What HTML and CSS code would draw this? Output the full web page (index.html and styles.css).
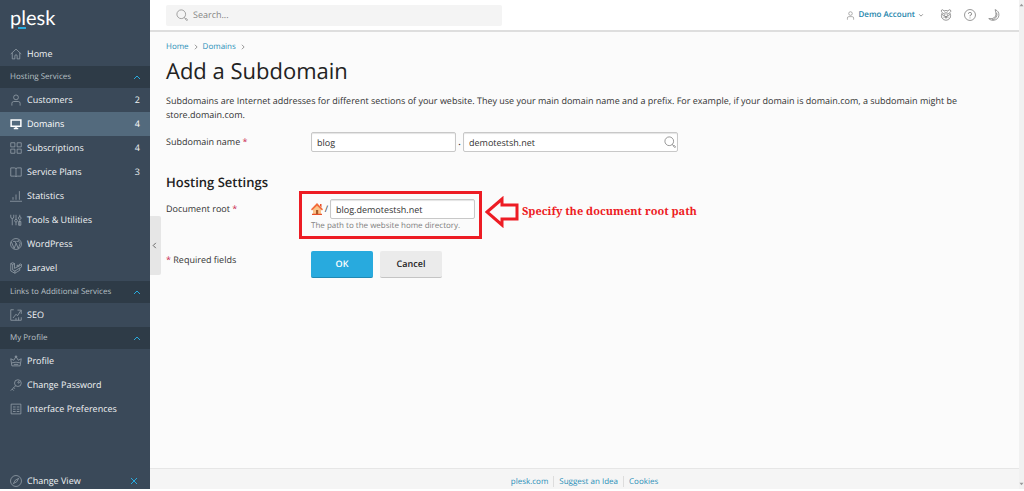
FILE: index.html
```html
<!DOCTYPE html>
<html lang="en">
<head>
    <meta charset="UTF-8">
    <meta name="viewport" content="width=device-width, initial-scale=1.0">
    <title>Add a Subdomain - Plesk</title>
    <link rel="stylesheet" href="styles.css">
</head>
<body>
    <div class="page">
        <!-- Sidebar -->
        <aside class="sidebar">
            <a class="logo" href="#">plesk</a>
            <nav class="nav">
                <ul class="menu">
                    <li><a class="menu-item" href="#">
                        <svg class="icon" viewBox="0 0 16 16"><path d="M1 8 8 1.500 15 8M3 6.500V14.500H6.500V10.500Q6.500 9 8 9T9.500 10.500V14.500H13V6.500"/></svg>
                        <span>Home</span></a></li>
                </ul>

                <button class="section" type="button">Hosting Services
                    <svg class="chevron" viewBox="0 0 8 8"><path d="M1 6 4 3 7 6"/></svg></button>
                <ul class="menu menu-main">
                    <li><a class="menu-item" href="#">
                        <svg class="icon" viewBox="0 0 16 16"><circle cx="8" cy="4.500" r="3.200"/><path d="M2.500 15.500V12.500Q2.500 10 5 10H11Q13.500 10 13.500 12.500V15.500"/></svg>
                        <span>Customers</span><span class="count">2</span></a></li>
                    <li><a class="menu-item active" href="#">
                        <svg class="icon" viewBox="0 0 16 16"><path stroke-width="2" d="M1.500 2.500H14.500V11H1.500Z"/><path stroke-width="2" d="M5 14H11M8 11V14"/></svg>
                        <span>Domains</span><span class="count">4</span></a></li>
                    <li><a class="menu-item" href="#">
                        <svg class="icon" viewBox="0 0 16 16"><path d="M1 1H6.500V6.500H1ZM9.500 1H15V6.500H9.500ZM1 9.500H6.500V15H1ZM9.500 9.500H15V15H9.500Z"/></svg>
                        <span>Subscriptions</span><span class="count">4</span></a></li>
                    <li><a class="menu-item" href="#">
                        <svg class="icon" viewBox="0 0 16 16"><path d="M1 2.500H6Q8 2.500 8 4 8 2.500 10 2.500H15V13.500H10Q8 13.500 8 14.500 8 13.500 6 13.500H1ZM8 4V14"/></svg>
                        <span>Service Plans</span><span class="count">3</span></a></li>
                    <li><a class="menu-item" href="#">
                        <svg class="icon" viewBox="0 0 16 16"><path d="M0 15H16M4 13V9.500M8 13V6M12.500 13V1.500"/></svg>
                        <span>Statistics</span></a></li>
                    <li><a class="menu-item" href="#">
                        <svg class="icon" viewBox="0 0 16 16"><path d="M1 1V4Q1 6 3 6T5 4V1M3 6V15M8 1V7M8 11V15M13 1V4M13 8V15M11.500 10H14.500V15H11.500Z"/><circle cx="8" cy="9" r="1.800"/><circle cx="13" cy="5.500" r="1.800"/></svg>
                        <span>Tools &amp; Utilities</span></a></li>
                    <li><a class="menu-item" href="#">
                        <svg class="icon" viewBox="0 0 16 16"><circle cx="8" cy="8" r="7.300"/><path d="M1.800 5 5.500 14 8 7.500 6.800 4.500M4 4.500H7.500M8 6.500 11 14 13.500 7.500Q13.500 6 12 5T12 2.500M8.500 4.500H11"/></svg>
                        <span>WordPress</span></a></li>
                    <li><a class="menu-item" href="#">
                        <svg class="icon" viewBox="0 0 16 16"><path d="M1 2 3.500 1 6 2V8.500L12 5.500V3.500L14 2.500 15.500 3.500V6.500L13 8V11L6.500 15 1 12ZM1 2 3.500 3.500 6 2M3.500 3.500V10.500L6.500 12 13 8M6.500 12V15M9.500 4 12 5.500 15.500 3.500M9.500 4V6.500"/></svg>
                        <span>Laravel</span></a></li>
                </ul>

                <button class="section" type="button">Links to Additional Services
                    <svg class="chevron" viewBox="0 0 8 8"><path d="M1 6 4 3 7 6"/></svg></button>
                <ul class="menu">
                    <li><a class="menu-item" href="#">
                        <svg class="icon" viewBox="0 0 16 16"><path d="M5 1H1V15H15V11M4 12 8 7 10 9 14.500 2M10 1.500H15V6.500M8 15V12M11.500 15V11"/></svg>
                        <span>SEO</span></a></li>
                </ul>

                <button class="section" type="button">My Profile
                    <svg class="chevron" viewBox="0 0 8 8"><path d="M1 6 4 3 7 6"/></svg></button>
                <ul class="menu">
                    <li><a class="menu-item" href="#">
                        <svg class="icon" viewBox="0 0 16 16"><path d="M2.500 14.500 1 5 5 7 8 2 11 7 15 5 13.500 14.500ZM2.500 10.500Q8 8.500 13.500 10.500M5 12.500H11"/><circle cx="8" cy="2" r="1"/></svg>
                        <span>Profile</span></a></li>
                    <li><a class="menu-item" href="#">
                        <svg class="icon" viewBox="0 0 16 16"><circle cx="10.500" cy="5.500" r="4.500"/><circle cx="11.500" cy="4.500" r="1"/><path d="M7.500 9 1 15.500M3 13.500 5 15.500M5 11.500 6.500 13"/></svg>
                        <span>Change Password</span></a></li>
                    <li><a class="menu-item" href="#">
                        <svg class="icon" viewBox="0 0 16 16"><path d="M1.500 1.500H14.500V14.500H1.500Z"/><path d="M4 5.300H7.500M9 5.300H12.500M4 8.300H7.500M9 8.300H12.500M4 11.300H7.500M9 11.300H12.500"/></svg>
                        <span>Interface Preferences</span></a></li>
                </ul>
            </nav>
            <div class="change-view">
                <a class="menu-item" href="#">
                    <svg class="icon" viewBox="0 0 16 16"><circle cx="8" cy="8" r="7.300"/><path d="M11.500 4.500 9 9 4.500 11.500 7 7Z"/></svg>
                    <span>Change View</span></a>
                <button class="close" type="button" aria-label="Close">
                    <svg viewBox="0 0 8 8"><path d="M1 1 7 7M7 1 1 7"/></svg></button>
            </div>
        </aside>

        <div class="main">
            <!-- Top bar -->
            <header class="topbar">
                <label class="search">
                    <svg class="icon" viewBox="0 0 16 16"><circle cx="7" cy="7" r="5.800"/><path d="M11 11 12.500 12.500M12 13 13 12 15.500 14.500 14.500 15.500Z"/></svg>
                    <input type="text" placeholder="Search..." aria-label="Search">
                </label>
                <div class="tools">
                    <button class="account" type="button">
                        <svg class="small-icon" viewBox="0 0 16 16"><circle cx="8" cy="4.500" r="3.200"/><path d="M2.500 15.500V12.500Q2.500 10 5 10H11Q13.500 10 13.500 12.500V15.500"/></svg>
                        Demo Account
                        <svg class="caret" viewBox="0 0 8 8"><path d="M1.500 3 4 5.500 6.500 3"/></svg>
                    </button>
                    <button class="tool" type="button" aria-label="Advisor">
                        <svg class="icon" viewBox="0 0 16 16"><path d="M3 4.500Q1 3 2 1.500T5.500 2.500Q8 1.500 10.500 2.500 12.500 0 14 1.500T13 4.500Q15 9 13.500 12 11.500 15 8 15T2.500 12Q1 9 3 4.500ZM6.500 10.500H9.500L8 12.500ZM4.500 12Q8 7.500 11.500 12M6 3.500 8 6 10 3.500"/><circle cx="5" cy="7.500" r="1.500"/><circle cx="11" cy="7.500" r="1.500"/></svg></button>
                    <button class="tool" type="button" aria-label="Help">
                        <svg class="icon" viewBox="0 0 16 16"><circle cx="8" cy="8" r="7.300"/><path d="M5.800 6.500Q5.800 4.500 8 4.500T10.200 6.500 8 8.500V9.800M8 11.300V12.500"/></svg></button>
                    <button class="tool" type="button" aria-label="Dark mode">
                        <svg class="icon" viewBox="0 0 16 16"><path d="M9.500 .8Q15 3 14.500 8.500T7 15.200Q3.500 15.200 1 12.800 6 13.800 9 11T9.500 .8ZM11.500 5Q12.800 8.500 10.500 11.500T5.500 14"/></svg></button>
                </div>
            </header>

            <!-- Content -->
            <main class="content">
                <button class="collapse" type="button" aria-label="Collapse sidebar">
                    <svg viewBox="0 0 8 8"><path d="M5.500 1 2.500 4 5.500 7"/></svg></button>
                <nav class="breadcrumbs">
                    <a href="#">Home</a>
                    <svg viewBox="0 0 8 8"><path d="M2.500 1 5.500 4 2.500 7"/></svg>
                    <a href="#">Domains</a>
                    <svg viewBox="0 0 8 8"><path d="M2.500 1 5.500 4 2.500 7"/></svg>
                </nav>
                <h1>Add a Subdomain</h1>
                <p class="intro">Subdomains are Internet addresses for different sections of your website. They use your main domain name and a prefix. For example, if your domain is domain.com, a subdomain might be store.domain.com.</p>

                <form>
                    <div class="row">
                        <label for="subdomain">Subdomain name <span class="req">*</span></label>
                        <div class="controls">
                            <input class="field" type="text" id="subdomain" value="blog">
                            <span class="dot">.</span>
                            <span class="lookup">
                                <input class="field" type="text" value="demotestsh.net" aria-label="Parent domain">
                                <svg class="icon" viewBox="0 0 16 16"><circle cx="7" cy="7" r="5.800"/><path d="M11 11 12.500 12.500M12 13 13 12 15.500 14.500 14.500 15.500Z"/></svg>
                            </span>
                        </div>
                    </div>

                    <h2>Hosting Settings</h2>
                    <div class="row row-root">
                        <label for="docroot">Document root <span class="req">*</span></label>
                        <div class="callout">
                            <div class="highlight">
                                <div class="controls">
                                    <svg class="house" viewBox="0 0 12 12"><path fill="#fbc48a" d="M2 6 6 2 10 6V11.500H2Z"/><path fill="#e8502a" d="M9 1H10.500V4.500L9 3ZM1 10.700H11V12H1Z"/><path fill="#f26b3a" d="M6 0 12 6.300 11 7.500 6 2.800 1 7.500 0 6.300Z"/><path fill="#a85a2a" d="M5 7H7.200V11H5Z"/></svg>
                                    <span class="slash">/</span>
                                    <input class="field" type="text" id="docroot" value="blog.demotestsh.net">
                                </div>
                                <div class="hint">The path to the website home directory.</div>
                            </div>
                            <div class="pointer">
                                <svg class="arrow" viewBox="0 0 34 32"><path d="M2 16 17 3V9H32V23H17V29Z"/></svg>
                                <span class="note">Specify the document root path</span>
                            </div>
                        </div>
                    </div>

                    <div class="row row-actions">
                        <div class="required"><span class="req">*</span> Required fields</div>
                        <div class="buttons">
                            <button class="btn btn-primary" type="submit">OK</button>
                            <button class="btn" type="button">Cancel</button>
                        </div>
                    </div>
                </form>
            </main>

            <!-- Footer -->
            <footer class="footer">
                <a href="#">plesk.com</a>
                <a href="#">Suggest an Idea</a>
                <a href="#">Cookies</a>
            </footer>
        </div>

        <div class="scrollbar">
            <svg viewBox="0 0 5 5"><path d="M0 4 2.500 1 5 4Z"/></svg>
            <svg viewBox="0 0 5 5"><path d="M0 1 2.500 4 5 1Z"/></svg>
        </div>
    </div>
</body>
</html>
```

FILE: styles.css
```css
* {
    box-sizing: border-box;
}
body {
    margin: 0;
    font-family: "Open Sans", sans-serif;
    font-size: 9px;
    line-height: 14px;
    text-rendering: geometricPrecision;
    color: #333;
    background-color: #fff;
}
a {
    color: #2a8fb8;
    text-decoration: none;
}
button, input {
    font: inherit;
    color: inherit;
    text-rendering: inherit;
}
button {
    padding: 0;
    border: none;
    background: none;
    cursor: pointer;
}
svg {
    display: block;
    flex: none;
    fill: none;
    stroke: currentColor;
}
.page {
    display: flex;
    min-height: 100vh;
    padding-bottom: 2px;
}
.icon {
    width: 12px;
    height: 12px;
}

/* Sidebar */
.sidebar {
    display: flex;
    flex-direction: column;
    flex: none;
    width: 150px;
    background-color: #3a4959;
    color: #e3e7ea;
}
.logo {
    height: 42px;
    padding: 6px 10px 0;
    font-family: Lato, sans-serif;
    font-size: 20px;
    line-height: 24px;
    color: #fff;
}
.logo::after {
    content: "";
    display: block;
    width: 8px;
    height: 2px;
    margin: -3px 0 0 8px;
    background-color: #28aade;
}
.nav {
    flex: 1;
}
.menu {
    margin: 0;
    padding: 0;
    list-style: none;
}
.menu-main {
    padding-bottom: 1px;
}
.menu-item {
    display: flex;
    align-items: center;
    gap: 5px;
    height: 24px;
    padding: 0 10px;
    color: #f0f2f4;
}
.menu-item .icon {
    color: #9aa4ad;
}
.menu-item.active {
    background-color: #536a7d;
    color: #fff;
}
.menu-item.active .icon {
    color: #fff;
}
.count {
    margin-left: auto;
}
.section {
    display: flex;
    align-items: center;
    justify-content: space-between;
    width: 100%;
    height: 22px;
    padding: 0 9px 0 10px;
    background-color: #2e3b47;
    color: #b8c0c6;
    font-size: 8px;
}
.chevron {
    width: 8px;
    height: 8px;
    color: #28aade;
}
.change-view {
    display: flex;
    align-items: center;
    justify-content: space-between;
    height: 16px;
    padding-right: 12px;
}
.close {
    color: #28aade;
}
.close svg {
    width: 8px;
    height: 8px;
}

/* Top bar */
.main {
    display: flex;
    flex-direction: column;
    flex: 1;
    background-color: #fbfbfb;
}
.topbar {
    display: flex;
    align-items: center;
    justify-content: space-between;
    height: 32px;
    padding: 0 19px 0 16px;
    background-color: #fff;
    border-bottom: 2px solid #dedede;
}
.search {
    display: flex;
    align-items: center;
    gap: 5px;
    width: 336px;
    height: 21px;
    padding: 0 10px;
    border-radius: 2px;
    background-color: #f4f4f4;
    color: #868686;
}
.search input {
    flex: 1;
    padding: 0;
    border: none;
    outline: none;
    background: none;
}
.search input::placeholder {
    color: #868686;
}
.tools {
    display: flex;
    align-items: center;
    gap: 12px;
    color: #777;
}
.account {
    display: flex;
    align-items: center;
    gap: 3px;
    margin-right: 4px;
    color: #2484ab;
    font-size: 8px;
    font-weight: 600;
}
.small-icon {
    width: 9px;
    height: 9px;
    color: #777;
}
.caret {
    width: 6px;
    height: 6px;
    color: #777;
}

/* Content */
.content {
    position: relative;
    flex: 1;
    padding: 8px 16px;
}
.collapse {
    position: absolute;
    left: 0;
    top: 184px;
    width: 11px;
    height: 59px;
    border-radius: 0 2px 2px 0;
    background-color: #e6e6e6;
    color: #555;
}
.collapse svg {
    width: 7px;
    height: 7px;
    margin-left: 1px;
}
.breadcrumbs {
    display: flex;
    align-items: center;
    gap: 4px;
    font-size: 8px;
}
.breadcrumbs svg {
    width: 6px;
    height: 6px;
    color: #777;
}
h1 {
    margin: 3px 0 11px;
    font-size: 22px;
    line-height: 28px;
    font-weight: 400;
    color: #222;
}
.intro {
    margin: -2px 0 0;
}
.row {
    display: grid;
    grid-template-columns: 145px 1fr;
    margin-top: 10px;
}
.row > label {
    padding-top: 3px;
}
.req {
    color: #c9264b;
}
.controls {
    display: flex;
    align-items: center;
}
.field {
    width: 145px;
    height: 20px;
    padding: 0 5px;
    border: 1px solid #c8c8c8;
    border-radius: 2px;
    background-color: #fff;
    box-shadow: inset 0 1px 1px #e4e4e4;
}
.dot {
    width: 7px;
    text-align: center;
    font-weight: 600;
}
.lookup {
    display: grid;
    grid-template-columns: 1fr 14px;
    align-items: center;
    width: 215px;
}
.lookup .field {
    grid-area: 1 / 1 / 2 / 3;
    width: 100%;
    padding-right: 20px;
}
.lookup .icon {
    grid-area: 1 / 2;
    color: #777;
}
h2 {
    margin: 21px 0 0;
    font-size: 13px;
    line-height: 18px;
    font-weight: 600;
    color: #222;
}
.row-root {
    margin-top: 8px;
}
.slash {
    width: 7px;
    text-align: center;
}
.house {
    width: 12px;
    height: 12px;
    stroke: none;
}
.hint {
    font-size: 8px;
    line-height: 14px;
    color: #808080;
}

/* Red callout around the document root */
.callout {
    display: flex;
    align-items: flex-start;
    margin: -8px 0 0 -12px;
    color: #ed1c24;
}
.highlight {
    padding: 5px 4px 3px 9px;
    border: 3px solid #ed1c24;
    color: #333;
}
.pointer {
    display: flex;
    align-items: center;
    padding: 5px 3px;
    gap: 3px;
}
.arrow {
    width: 34px;
    height: 32px;
    stroke-width: 3;
}
.note {
    font-family: "Noto Serif", "Liberation Serif", serif;
    font-size: 11px;
    font-weight: 700;
}

.row-actions {
    margin-top: 12px;
}
.required {
    padding-top: 2px;
}
.buttons {
    display: flex;
    gap: 7px;
}
.btn {
    width: 62px;
    height: 27px;
    border-bottom: 1px solid #c4c4c4;
    border-radius: 2px;
    background-color: #ebebeb;
    color: #222;
    font-weight: 600;
}
.btn-primary {
    background-color: #28aade;
    border-bottom-color: #2089b4;
    color: #fff;
}

/* Footer */
.footer {
    display: flex;
    justify-content: center;
    align-items: center;
    height: 21px;
    padding-top: 4px;
    border-top: 1px solid #e6e6e6;
    background-color: #f5f5f5;
    font-size: 8px;
    line-height: 11px;
}
.footer a {
    padding: 0 5px;
}
.footer a + a {
    border-left: 1px solid #ddd;
}

.scrollbar {
    display: flex;
    flex-direction: column;
    justify-content: space-between;
    width: 5px;
    padding: 3px 0;
    background-color: #f1f1f1;
}
.scrollbar svg {
    height: 4px;
    stroke: none;
    fill: #999;
}
```
